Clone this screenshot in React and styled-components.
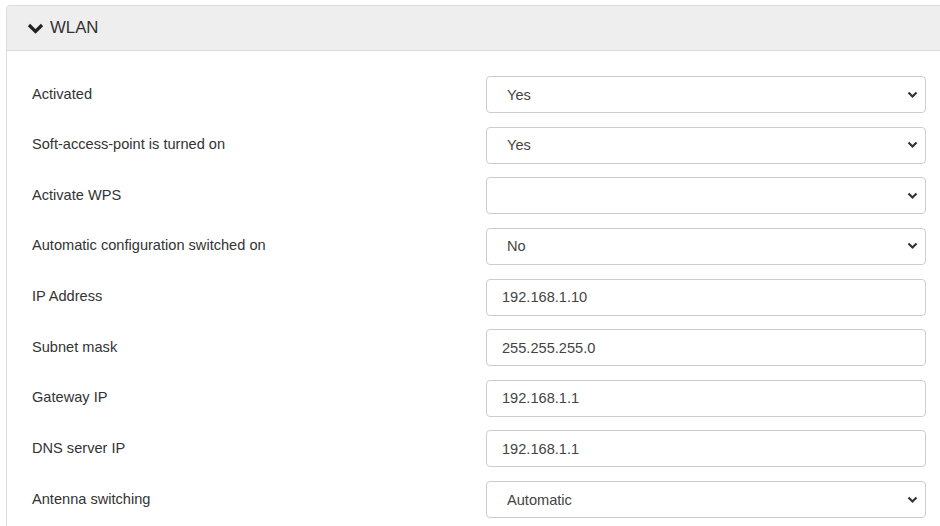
import React from 'react';
import styled, { createGlobalStyle } from 'styled-components';

const GlobalStyle = createGlobalStyle`
  html, body {
    margin: 0;
    padding: 0;
    background: #fff;
    font-family: "Liberation Sans", Arial, sans-serif;
    color: #333;
  }
`;

const Page = styled.div`
  padding: 5px 0 0 6px;
  width: 940px;
  height: 526px;
  box-sizing: border-box;
  overflow: hidden;
`;

const Panel = styled.section`
  border: 1px solid #ddd;
  border-right: none;
  border-radius: 4px 0 0 0;
  background: #fff;
`;

const Header = styled.div`
  display: flex;
  align-items: center;
  gap: 6px;
  height: 44px;
  padding-left: 20px;
  background: #eeeeee;
  border-bottom: 1px solid #ddd;
  font-size: 16.8px;
  color: #333;
`;

const Body = styled.div`
  padding: 25px 13px 0 25px;
`;

const Row = styled.div`
  display: grid;
  grid-template-columns: 454px 440px;
  align-items: center;
  height: 36px;
  margin-bottom: 14.625px;
`;

const Label = styled.label`
  font-size: 14.6px;
  color: #333;
  margin-top: -2px;
`;

const Field = styled.div`
  position: relative;
  height: 37px;
  box-sizing: border-box;
  border: 1px solid #ccc;
  border-radius: 4px;
  background: #fff;
  display: flex;
  align-items: center;
  padding-left: ${p => (p.$select ? 20 : 15)}px;
  font-size: 14.6px;
  color: #444;
`;

const Arrow = styled.svg`
  position: absolute;
  right: 7px;
  top: 50%;
  margin-top: -4px;
`;

const rows = [
  { label: 'Activated', value: 'Yes', select: true },
  { label: 'Soft-access-point is turned on', value: 'Yes', select: true },
  { label: 'Activate WPS', value: '', select: true },
  { label: 'Automatic configuration switched on', value: 'No', select: true },
  { label: 'IP Address', value: '192.168.1.10' },
  { label: 'Subnet mask', value: '255.255.255.0' },
  { label: 'Gateway IP', value: '192.168.1.1' },
  { label: 'DNS server IP', value: '192.168.1.1' },
  { label: 'Antenna switching', value: 'Automatic', select: true },
];

export default function App() {
  return (
    <>
      <GlobalStyle />
      <Page>
        <Panel>
          <Header>
            <svg width="17" height="11" viewBox="0 0 17 11">
              <path d="M2 2 L8.5 8.5 L15 2" fill="none" stroke="#222" strokeWidth="3.2" />
            </svg>
            <span>WLAN</span>
          </Header>
          <Body>
            {rows.map(r => (
              <Row key={r.label}>
                <Label>{r.label}</Label>
                <Field $select={r.select}>
                  {r.value}
                  {r.select && (
                    <Arrow width="11" height="8" viewBox="0 0 11 8">
                      <path d="M1.5 1.5 L5.5 5.5 L9.5 1.5" fill="none" stroke="#333" strokeWidth="2.2" />
                    </Arrow>
                  )}
                </Field>
              </Row>
            ))}
          </Body>
        </Panel>
      </Page>
    </>
  );
}
